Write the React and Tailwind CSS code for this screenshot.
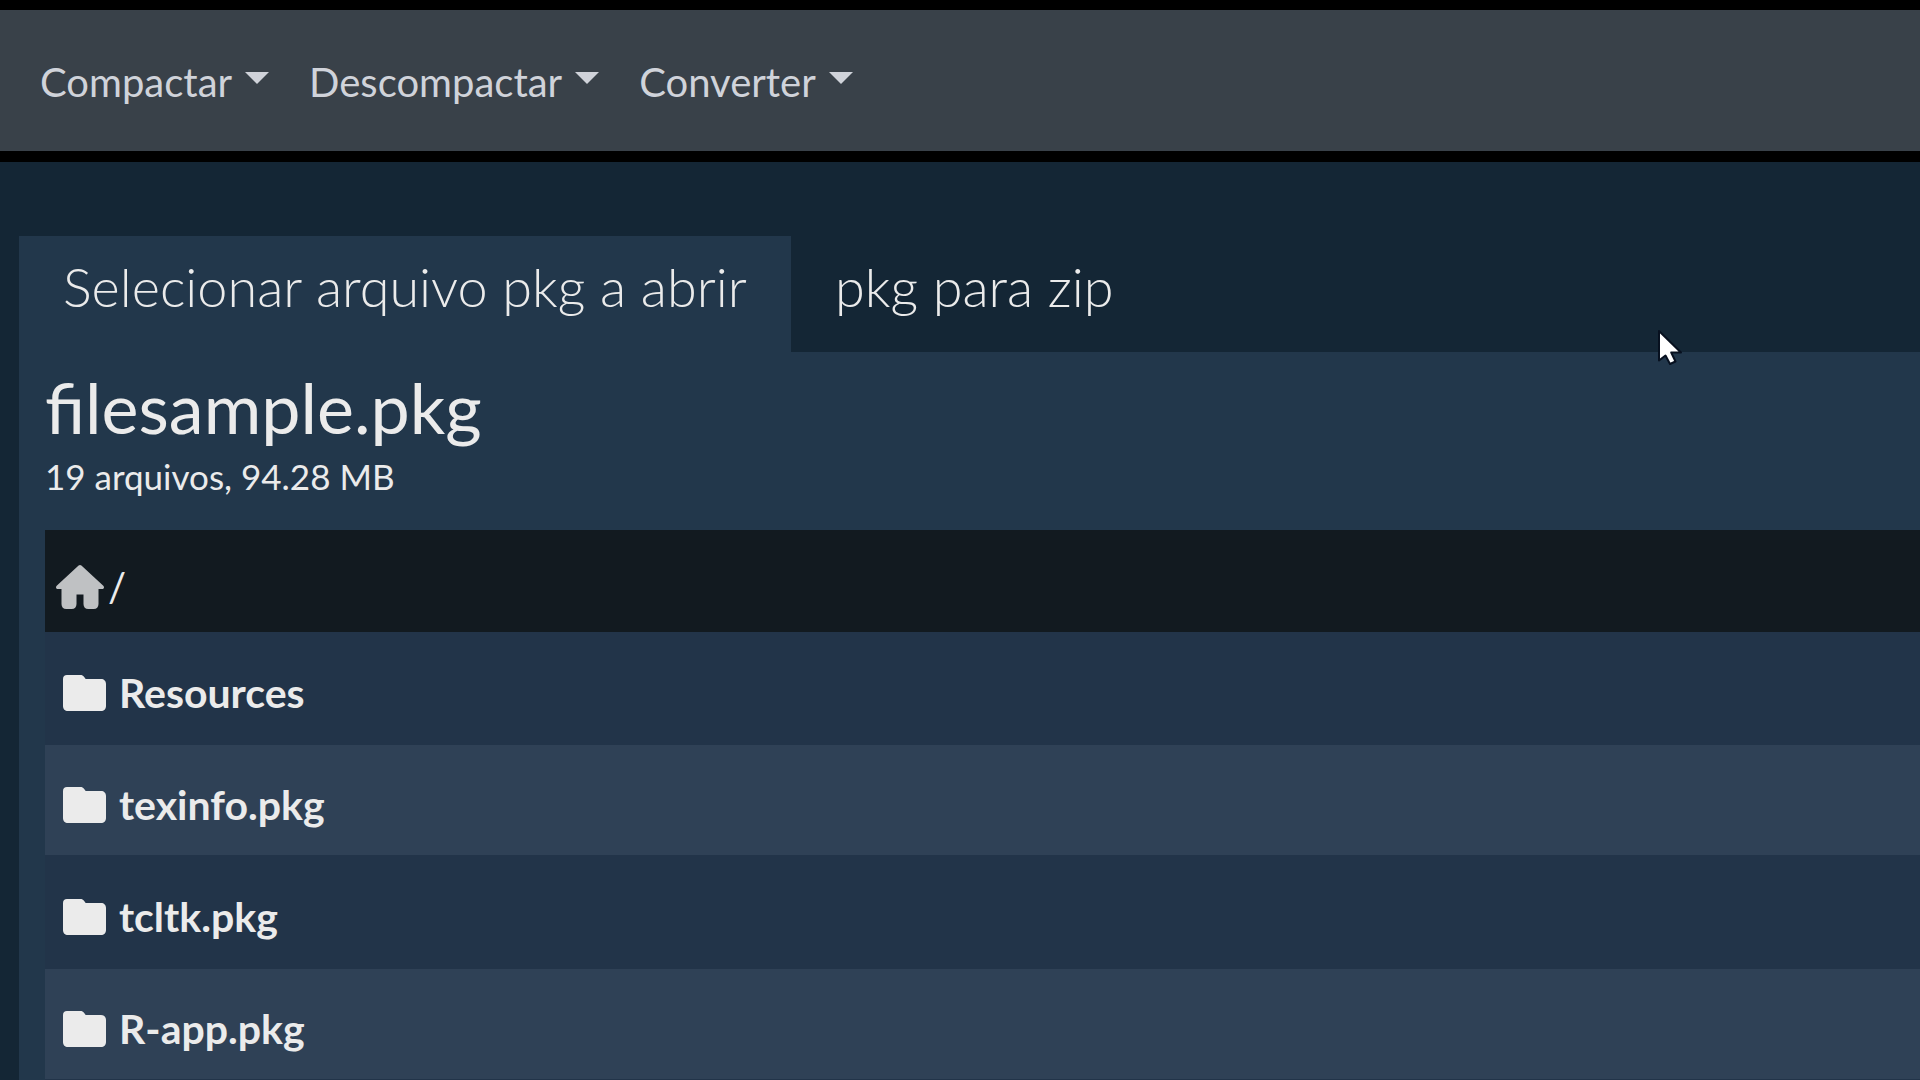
import clsx from 'clsx';

const menus = ['Compactar', 'Descompactar', 'Converter'];

const tabs = [
  { label: 'Selecionar arquivo pkg a abrir', active: true },
  { label: 'pkg para zip', active: false },
];

const entries = ['Resources', 'texinfo.pkg', 'tcltk.pkg', 'R-app.pkg'];

function HomeIcon() {
  return (
    <svg viewBox="0 0 48 44" className="h-11 w-12" fill="#bfc1c3" aria-hidden="true">
      <path d="M22.600.6.700 20.800c-1.300 1.200-.7 3.200 1 3.200H5.500v15c0 3 1.800 5 4.800 5h5.400c3 0 4.800-2 4.800-5v-9.500h7V39c0 3 1.800 5 4.800 5h5.400c3 0 4.800-2 4.800-5V24h3.800c1.700 0 2.300-2 1-3.200L25.400.6c-.8-.7-2-.7-2.800 0z" />
    </svg>
  );
}

function FolderIcon() {
  return (
    <svg viewBox="0 0 43 36" className="h-9 w-[43px]" fill="currentColor" aria-hidden="true">
      <path d="M4 0h13.500c1.500 0 2.600.6 3.500 1.700L22.700 4H38c3 0 5 2 5 5v22c0 3-2 5-5 5H5c-3 0-5-2-5-5V4c0-2.500 1.500-4 4-4z" />
    </svg>
  );
}

function Cursor() {
  return (
    <svg viewBox="0 0 26 37" className="pointer-events-none absolute left-[1657px] top-[329px] h-[37px] w-[26px]" aria-hidden="true">
      <path
        d="M2 2v29.500l6.500-5 4.500 8.500 5.500-2.500-4.300-9H24z"
        fill="#ffffff"
        stroke="#07101f"
        strokeWidth="2"
        strokeLinejoin="round"
      />
    </svg>
  );
}

export default function App() {
  return (
    <div className="relative h-screen overflow-hidden bg-[#142635] font-['Lato',sans-serif] text-[#ebebeb]">
      {/* Navbar */}
      <nav className="flex h-[162px] items-center gap-10 border-t-10 border-b-11 border-black bg-[#394149] px-10 pt-[2px]">
        {menus.map((label) => (
          <button key={label} type="button" className="flex items-center gap-[13px] text-[40px] leading-[60px] text-[#d0d3da]">
            {label}
            <svg viewBox="0 0 24 12" className="mb-2 h-3 w-6" fill="currentColor" aria-hidden="true">
              <path d="M0 0h24L12 12z" />
            </svg>
          </button>
        ))}
      </nav>

      <main className="pt-[74px] pl-[19px]">
        {/* Tabs */}
        <div className="flex" role="tablist">
          {tabs.map(({ label, active }) => (
            <button
              key={label}
              type="button"
              role="tab"
              aria-selected={active}
              className={clsx(
                'h-[116px] px-11 pb-[14px] text-[54px] leading-[84px] font-light whitespace-nowrap',
                active && 'bg-[#22374b]'
              )}
            >
              {label}
            </button>
          ))}
        </div>

        {/* Archive contents */}
        <section className="bg-[#22374b] pt-4 pl-[26px]">
          <h1 className="text-[70px] leading-[78px]">filesample.pkg</h1>
          <p className="pb-6 text-[35px] leading-[60px]">19 arquivos, 94.28 MB</p>

          <table className="w-full border-collapse text-left">
            <thead>
              <tr className="bg-[#121a20]">
                <th className="h-[102px] px-[11px] font-normal">
                  <div className="flex items-center gap-1 pt-3 text-[40px] leading-[60px]">
                    <a href="#" aria-label="Home">
                      <HomeIcon />
                    </a>
                    /
                  </div>
                </th>
              </tr>
            </thead>
            <tbody>
              {entries.map((name) => (
                <tr key={name} className="bg-[#223449] even:bg-[#2f4156]">
                  <td className="h-[112px] border-b-2 border-[#223449] px-[18px]">
                    <a href="#" className="flex items-center gap-[13px] pt-[10px] text-[41px] leading-[60px] font-bold">
                      <FolderIcon />
                      {name}
                    </a>
                  </td>
                </tr>
              ))}
            </tbody>
          </table>
        </section>
      </main>

      <Cursor />
    </div>
  );
}
